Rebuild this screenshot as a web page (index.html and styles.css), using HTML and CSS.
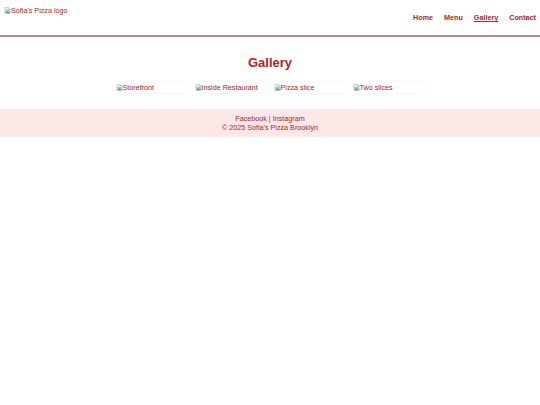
FILE: index.html
```html
<!DOCTYPE html>
<html lang="en">
<head>
<meta charset="utf-8">
<title>Sofia's Pizza - Gallery</title>
<link rel="stylesheet" href="styles.css">
</head>
<body>
<header class="site-header">
  <div class="logo">
    <span class="broken">
      <svg class="bicon" viewBox="0 0 16 16" width="7" height="7"><path d="M2 1h8l4 4v10H2z" fill="#f4f4f4" stroke="#9a9a9a" stroke-width="1"/><path d="M10 1v4h4" fill="none" stroke="#9a9a9a" stroke-width="1"/><rect x="3" y="6" width="10" height="8" fill="#9cc8ee"/><path d="M3 14l4-5 3 3 3-2v4z" fill="#5fae4e"/></svg><span class="alt">Sofia's Pizza logo</span>
    </span>
  </div>
  <nav class="nav">
    <a href="#">Home</a>
    <a href="#">Menu</a>
    <a href="#" class="active">Gallery</a>
    <a href="#">Contact</a>
  </nav>
</header>
<main class="main">
  <h2 class="title">Gallery</h2>
  <div class="gallery">
    <div class="photo"><svg class="bicon" viewBox="0 0 16 16" width="7" height="7"><path d="M2 1h8l4 4v10H2z" fill="#f4f4f4" stroke="#9a9a9a" stroke-width="1"/><path d="M10 1v4h4" fill="none" stroke="#9a9a9a" stroke-width="1"/><rect x="3" y="6" width="10" height="8" fill="#9cc8ee"/><path d="M3 14l4-5 3 3 3-2v4z" fill="#5fae4e"/></svg><span class="alt">Storefront</span></div>
    <div class="photo"><svg class="bicon" viewBox="0 0 16 16" width="7" height="7"><path d="M2 1h8l4 4v10H2z" fill="#f4f4f4" stroke="#9a9a9a" stroke-width="1"/><path d="M10 1v4h4" fill="none" stroke="#9a9a9a" stroke-width="1"/><rect x="3" y="6" width="10" height="8" fill="#9cc8ee"/><path d="M3 14l4-5 3 3 3-2v4z" fill="#5fae4e"/></svg><span class="alt">Inside Restaurant</span></div>
    <div class="photo"><svg class="bicon" viewBox="0 0 16 16" width="7" height="7"><path d="M2 1h8l4 4v10H2z" fill="#f4f4f4" stroke="#9a9a9a" stroke-width="1"/><path d="M10 1v4h4" fill="none" stroke="#9a9a9a" stroke-width="1"/><rect x="3" y="6" width="10" height="8" fill="#9cc8ee"/><path d="M3 14l4-5 3 3 3-2v4z" fill="#5fae4e"/></svg><span class="alt">Pizza slice</span></div>
    <div class="photo"><svg class="bicon" viewBox="0 0 16 16" width="7" height="7"><path d="M2 1h8l4 4v10H2z" fill="#f4f4f4" stroke="#9a9a9a" stroke-width="1"/><path d="M10 1v4h4" fill="none" stroke="#9a9a9a" stroke-width="1"/><rect x="3" y="6" width="10" height="8" fill="#9cc8ee"/><path d="M3 14l4-5 3 3 3-2v4z" fill="#5fae4e"/></svg><span class="alt">Two slices</span></div>
  </div>
</main>
<footer class="footer">
  <p class="footer-line"><a href="#">Facebook</a> | <a href="#">Instagram</a></p>
  <p class="footer-line">© 2025 Sofia's Pizza Brooklyn</p>
</footer>
</body>
</html>
```
FILE: styles.css
```css
* { box-sizing: border-box; }
html, body { margin: 0; padding: 0; background: #ffffff; }
body {
  font-family: "Liberation Sans", Arial, sans-serif;
  font-size: 7.2px;
  color: #b22222;
}
.site-header {
  display: flex;
  justify-content: space-between;
  align-items: center;
  padding: 4px 4px 4px 4px;
  height: 37px;
  border-bottom: 2px solid #c48383;
}
.logo {
  height: 27px;
  align-self: flex-start;
  padding-top: 2px;
}
.broken {
  display: inline-flex;
  align-items: center;
  line-height: 9px;
}
.bicon { display: block; flex: none; }
.alt { color: #b22222; }
.nav {
  display: flex;
  gap: 11px;
  align-items: center;
}
.nav a {
  color: #b22222;
  font-weight: bold;
  text-decoration: none;
  line-height: 9px;
}
.nav a.active { text-decoration: underline; }
.main {
  padding-top: 18px;
  padding-bottom: 16px;
}
.title {
  margin: 0 0 12px 0;
  text-align: center;
  font-size: 13px;
  line-height: 15px;
  font-weight: bold;
  color: #b22222;
}
.gallery {
  display: flex;
  justify-content: center;
  gap: 7px;
}
.photo {
  width: 72px;
  height: 11px;
  display: flex;
  align-items: center;
  border-radius: 5px;
  box-shadow: 0 0 2px rgba(200, 120, 120, 0.18);
  line-height: 9px;
  overflow: hidden;
}
.footer {
  background: #fde8e8;
  text-align: center;
  padding: 5px 0;
  color: #b22222;
}
.footer-line {
  margin: 0;
  line-height: 9px;
}
.footer a { color: #b22222; text-decoration: none; }
```
